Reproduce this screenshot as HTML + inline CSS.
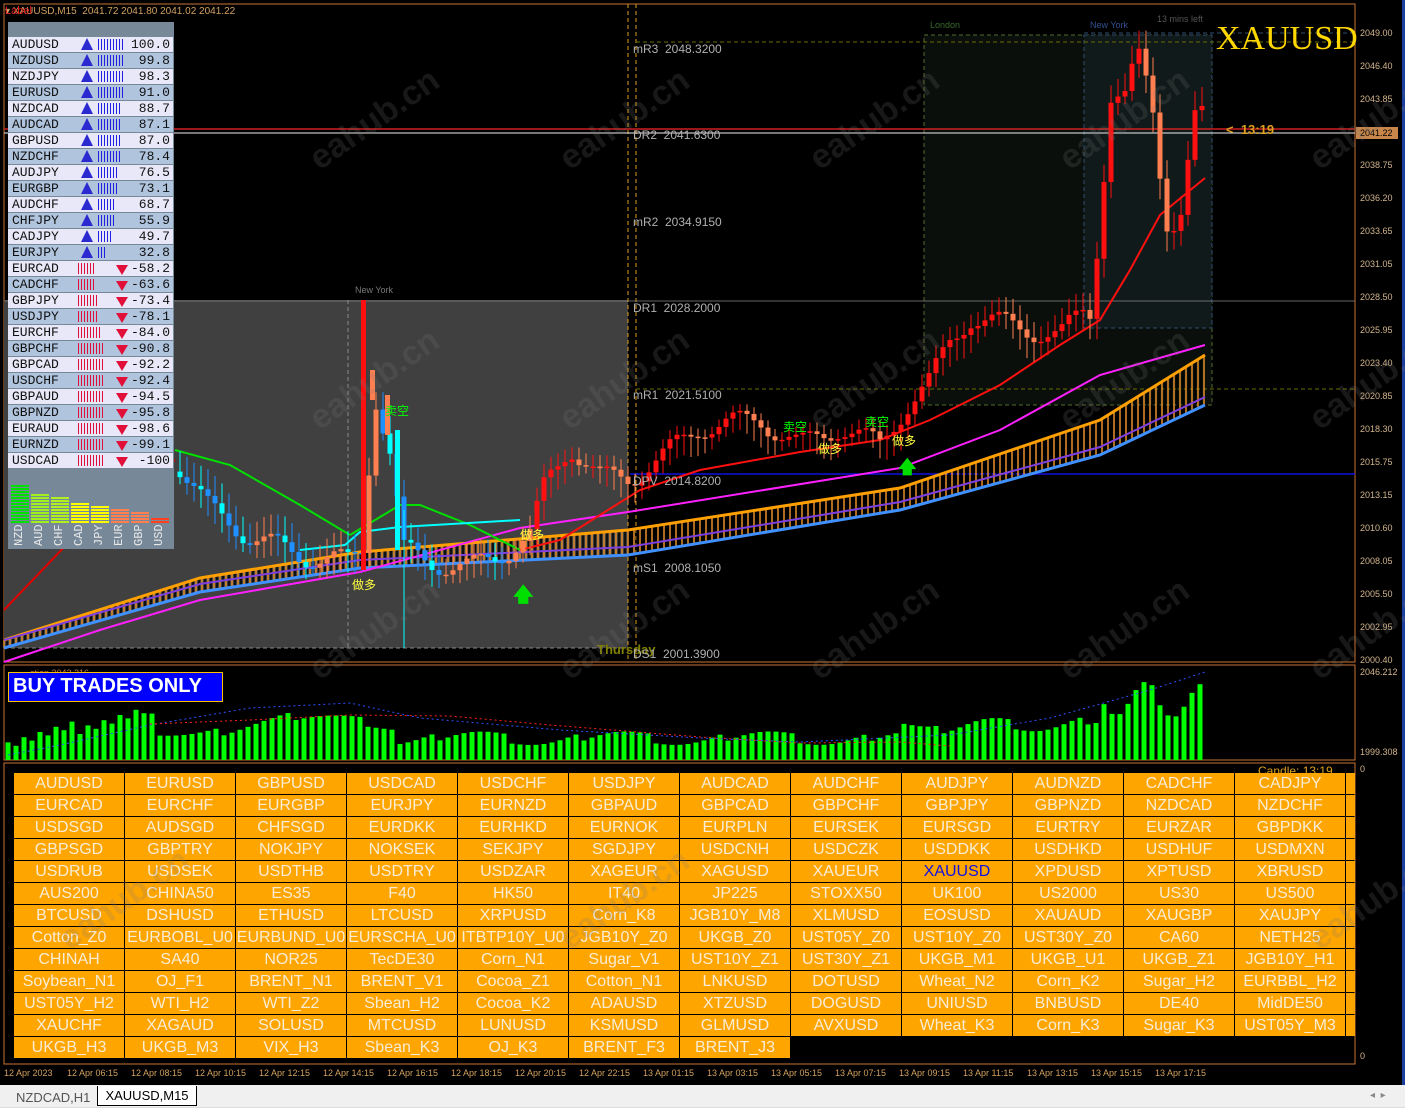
<!DOCTYPE html>
<html><head><meta charset="utf-8">
<style>
*{margin:0;padding:0;box-sizing:border-box}
body{width:1405px;height:1117px;background:#000;position:relative;overflow:hidden;font-family:"Liberation Sans","Noto Sans CJK SC",sans-serif}
.abs{position:absolute}
#tbl{left:8px;top:22px;width:166px;height:527px;background:#778899}
.row{position:absolute;left:0;width:165px;height:15px;font-family:"Liberation Mono",monospace;font-size:13px;line-height:15px;color:#111}
.row .n{position:absolute;left:4px}
.row .v{position:absolute;right:3px}
.row .bars{position:absolute;left:90px;top:2px;height:11px;background:repeating-linear-gradient(90deg,#2020e0 0 1px,transparent 1px 3px)}
.row.dn .bars{left:70px;background:repeating-linear-gradient(90deg,#e0103a 0 1px,transparent 1px 3px)}
.row .ar{position:absolute;left:73px;top:1px;width:0;height:0;border-left:6px solid transparent;border-right:6px solid transparent;border-bottom:12px solid #2a2ad0}
.row.dn .ar{left:108px;top:4px;border-bottom:none;border-top:10px solid #e0103a}
#grid{left:14px;top:773px}
.b{position:absolute;width:110px;height:21px;background:#ffa500;color:#f8ecd4;font-size:16px;line-height:21px;text-align:center;white-space:nowrap;overflow:hidden}
.pl{position:absolute;left:1360px;font-size:9px;color:#d2b48c;font-family:"Liberation Sans",sans-serif}
.tl{position:absolute;top:1068px;font-size:9px;color:#d2a060}
.piv{position:absolute;left:633px;font-size:12px;color:#b0b0b0}
.wm{position:absolute;font-size:34px;color:rgba(120,120,120,0.2);transform:rotate(-35deg);font-weight:bold;white-space:nowrap}
</style></head><body>

<svg class="abs" style="left:0;top:0" width="1405" height="1117" id="sv">
<rect x="0" y="0" width="1405" height="1085" fill="#000"/>
<rect x="4" y="4" width="1351" height="658" fill="none" stroke="#c87533" stroke-width="1"/>
<rect x="4" y="665" width="1351" height="95" fill="none" stroke="#c87533"/>
<rect x="4" y="763" width="1351" height="301" fill="none" stroke="#c87533"/>
<line x1="4" y1="1064" x2="1355" y2="1064" stroke="#c87533"/>
<rect x="4" y="300" width="624" height="348" fill="#404040"/>
<rect x="924" y="35" width="288" height="370" fill="#0b0f0b" stroke="#556b2f" stroke-dasharray="4,3"/>
<rect x="1084" y="35" width="128" height="293" fill="#111a1a" stroke="#2f4f6f" stroke-dasharray="4,3"/>
<line x1="348" y1="300" x2="348" y2="648" stroke="#888" stroke-dasharray="4,3"/>
<line x1="628" y1="4" x2="628" y2="662" stroke="#e0a020" stroke-dasharray="4,3"/>
<line x1="636" y1="4" x2="636" y2="662" stroke="#e0a020" stroke-dasharray="4,3"/>
<line x1="4" y1="648" x2="628" y2="648" stroke="#888" stroke-dasharray="4,3"/>
<line x1="636" y1="42" x2="1355" y2="42" stroke="#6b6b00" stroke-dasharray="4,3"/>
<line x1="1084" y1="33" x2="1355" y2="33" stroke="#2f4f6f" stroke-dasharray="4,3"/>
<line x1="636" y1="389" x2="1355" y2="389" stroke="#6b6b00" stroke-dasharray="4,3"/>
<line x1="4" y1="301" x2="1355" y2="301" stroke="#888" stroke-width="0.8"/>
<line x1="630" y1="474" x2="1355" y2="474" stroke="#1010e0" stroke-width="1.5"/>
<line x1="4" y1="129" x2="1355" y2="129" stroke="#d02020" stroke-width="1.5"/>
<line x1="4" y1="133" x2="1355" y2="133" stroke="#eee" stroke-width="1"/>
<g id="g"></g>
</svg>

<div class="abs" style="left:5px;top:6px;font-size:10px;color:#d2a060">▾ XAUUSD,M15&nbsp; 2041.72 2041.80 2041.02 2041.22</div>
<div class="abs" style="left:5px;top:5px;font-size:11px;color:#e02020">Label</div>
<div class="abs" style="left:1216px;top:20px;font-family:'Liberation Serif',serif;font-size:34px;color:#ffd700">XAUUSD</div>
<div class="abs" style="left:1157px;top:14px;font-size:9px;color:#555">13 mins left</div>
<div class="abs" style="left:1090px;top:20px;font-size:9px;color:#2f4f8f">New York</div>
<div class="abs" style="left:930px;top:20px;font-size:9px;color:#3a6b2a">London</div>
<div class="abs" style="left:355px;top:285px;font-size:9px;color:#777">New York</div>
<div class="abs" style="left:1226px;top:122px;font-size:13px;color:#e0a020;font-weight:bold">&lt;&nbsp; 13:19</div>
<div class="abs" style="left:597px;top:642px;font-size:13px;color:#808000;font-weight:bold">Thursday</div>
<div class="piv" style="top:42px">mR3&nbsp; 2048.3200</div>
<div class="piv" style="top:128px">DR2&nbsp; 2041.6300</div>
<div class="piv" style="top:215px">mR2&nbsp; 2034.9150</div>
<div class="piv" style="top:301px">DR1&nbsp; 2028.2000</div>
<div class="piv" style="top:388px">mR1&nbsp; 2021.5100</div>
<div class="piv" style="top:474px">DPV&nbsp; 2014.8200</div>
<div class="piv" style="top:561px">mS1&nbsp; 2008.1050</div>
<div class="piv" style="top:647px">DS1&nbsp; 2001.3900</div>
<div class="abs" style="left:783px;top:418px;font-size:12px;color:#00ff00">卖空</div>
<div class="abs" style="left:865px;top:413px;font-size:12px;color:#00ff00">卖空</div>
<div class="abs" style="left:385px;top:402px;font-size:12px;color:#00ff00">卖空</div>
<div class="abs" style="left:352px;top:576px;font-size:12px;color:#ffff40">做多</div>
<div class="abs" style="left:520px;top:526px;font-size:12px;color:#ffff40">做多</div>
<div class="abs" style="left:818px;top:440px;font-size:12px;color:#ffff40">做多</div>
<div class="abs" style="left:892px;top:432px;font-size:12px;color:#ffff40">做多</div>
<div class="abs" style="left:513px;top:580px;font-size:20px;color:#00e000;font-weight:bold">🡅</div>
<div class="abs" style="left:898px;top:455px;font-size:18px;color:#00e000;font-weight:bold">🡅</div>

<div class="pl" style="top:28px">2049.00</div><div class="pl" style="top:61px">2046.40</div><div class="pl" style="top:94px">2043.85</div>
<div class="abs" style="left:1356px;top:127px;width:42px;height:12px;background:#c8864a;color:#000;font-size:9px;line-height:12px;padding-left:4px">2041.22</div>
<div class="pl" style="top:160px">2038.75</div><div class="pl" style="top:193px">2036.20</div><div class="pl" style="top:226px">2033.65</div><div class="pl" style="top:259px">2031.05</div><div class="pl" style="top:292px">2028.50</div><div class="pl" style="top:325px">2025.95</div><div class="pl" style="top:358px">2023.40</div><div class="pl" style="top:391px">2020.85</div><div class="pl" style="top:424px">2018.30</div><div class="pl" style="top:457px">2015.75</div><div class="pl" style="top:490px">2013.15</div><div class="pl" style="top:523px">2010.60</div><div class="pl" style="top:556px">2008.05</div><div class="pl" style="top:589px">2005.50</div><div class="pl" style="top:622px">2002.95</div><div class="pl" style="top:655px">2000.40</div>
<div class="pl" style="top:667px">2046.212</div><div class="pl" style="top:747px">1999.308</div><div class="pl" style="top:764px">0</div><div class="pl" style="top:1051px">0</div>
<div class="abs" style="left:1402px;top:0;width:3px;height:1085px;background:#1c3f9f"></div>

<div class="abs" style="left:30px;top:668px;font-size:9px;color:#c87533">ction 2043.216</div>
<div class="abs" style="left:8px;top:672px;width:215px;height:30px;background:#0000ff;border:1px solid #ffc000;color:#fff;font-weight:bold;font-size:20px;line-height:26px;padding-left:4px">BUY TRADES ONLY</div>
<div class="abs" style="left:1258px;top:764px;font-size:12px;color:#e0a020">Candle: 13:19</div>

<div class="tl" style="left:4px">12 Apr 2023</div><div class="tl" style="left:67px">12 Apr 06:15</div><div class="tl" style="left:131px">12 Apr 08:15</div><div class="tl" style="left:195px">12 Apr 10:15</div><div class="tl" style="left:259px">12 Apr 12:15</div><div class="tl" style="left:323px">12 Apr 14:15</div><div class="tl" style="left:387px">12 Apr 16:15</div><div class="tl" style="left:451px">12 Apr 18:15</div><div class="tl" style="left:515px">12 Apr 20:15</div><div class="tl" style="left:579px">12 Apr 22:15</div><div class="tl" style="left:643px">13 Apr 01:15</div><div class="tl" style="left:707px">13 Apr 03:15</div><div class="tl" style="left:771px">13 Apr 05:15</div><div class="tl" style="left:835px">13 Apr 07:15</div><div class="tl" style="left:899px">13 Apr 09:15</div><div class="tl" style="left:963px">13 Apr 11:15</div><div class="tl" style="left:1027px">13 Apr 13:15</div><div class="tl" style="left:1091px">13 Apr 15:15</div><div class="tl" style="left:1155px">13 Apr 17:15</div>

<div class="abs" style="left:0;top:1085px;width:1405px;height:22px;background:#f0f0f0"></div>
<div class="abs" style="left:0;top:1107px;width:1405px;height:10px;background:#fff;border-top:1px solid #ddd"></div>
<div class="abs" style="left:16px;top:1090px;font-size:13px;color:#555">NZDCAD,H1</div>
<div class="abs" style="left:97px;top:1086px;width:100px;height:20px;background:#fff;border:1px solid #000;border-top:none;font-size:13px;line-height:20px;text-align:center;color:#000">XAUUSD,M15</div>
<div class="abs" style="left:1370px;top:1090px;font-size:10px;color:#888">◂ &nbsp;▸</div>

<div class="abs" id="tbl">
<div class="row" style="top:15px;background:#e8e8f8"><span class="n">AUDUSD</span><span class="ar"></span><span class="bars" style="width:27px"></span><span class="v">100.0</span></div>
<div class="row" style="top:31px;background:#b0c4de"><span class="n">NZDUSD</span><span class="ar"></span><span class="bars" style="width:27px"></span><span class="v">99.8</span></div>
<div class="row" style="top:47px;background:#e8e8f8"><span class="n">NZDJPY</span><span class="ar"></span><span class="bars" style="width:27px"></span><span class="v">98.3</span></div>
<div class="row" style="top:63px;background:#b0c4de"><span class="n">EURUSD</span><span class="ar"></span><span class="bars" style="width:27px"></span><span class="v">91.0</span></div>
<div class="row" style="top:79px;background:#e8e8f8"><span class="n">NZDCAD</span><span class="ar"></span><span class="bars" style="width:24px"></span><span class="v">88.7</span></div>
<div class="row" style="top:95px;background:#b0c4de"><span class="n">AUDCAD</span><span class="ar"></span><span class="bars" style="width:24px"></span><span class="v">87.1</span></div>
<div class="row" style="top:111px;background:#e8e8f8"><span class="n">GBPUSD</span><span class="ar"></span><span class="bars" style="width:24px"></span><span class="v">87.0</span></div>
<div class="row" style="top:127px;background:#b0c4de"><span class="n">NZDCHF</span><span class="ar"></span><span class="bars" style="width:24px"></span><span class="v">78.4</span></div>
<div class="row" style="top:143px;background:#e8e8f8"><span class="n">AUDJPY</span><span class="ar"></span><span class="bars" style="width:21px"></span><span class="v">76.5</span></div>
<div class="row" style="top:159px;background:#b0c4de"><span class="n">EURGBP</span><span class="ar"></span><span class="bars" style="width:21px"></span><span class="v">73.1</span></div>
<div class="row" style="top:175px;background:#e8e8f8"><span class="n">AUDCHF</span><span class="ar"></span><span class="bars" style="width:18px"></span><span class="v">68.7</span></div>
<div class="row" style="top:191px;background:#b0c4de"><span class="n">CHFJPY</span><span class="ar"></span><span class="bars" style="width:18px"></span><span class="v">55.9</span></div>
<div class="row" style="top:207px;background:#e8e8f8"><span class="n">CADJPY</span><span class="ar"></span><span class="bars" style="width:15px"></span><span class="v">49.7</span></div>
<div class="row" style="top:223px;background:#b0c4de"><span class="n">EURJPY</span><span class="ar"></span><span class="bars" style="width:9px"></span><span class="v">32.8</span></div>
<div class="row dn" style="top:239px;background:#e8e8f8"><span class="n">EURCAD</span><span class="bars" style="width:18px"></span><span class="ar"></span><span class="v">-58.2</span></div>
<div class="row dn" style="top:255px;background:#b0c4de"><span class="n">CADCHF</span><span class="bars" style="width:18px"></span><span class="ar"></span><span class="v">-63.6</span></div>
<div class="row dn" style="top:271px;background:#e8e8f8"><span class="n">GBPJPY</span><span class="bars" style="width:21px"></span><span class="ar"></span><span class="v">-73.4</span></div>
<div class="row dn" style="top:287px;background:#b0c4de"><span class="n">USDJPY</span><span class="bars" style="width:21px"></span><span class="ar"></span><span class="v">-78.1</span></div>
<div class="row dn" style="top:303px;background:#e8e8f8"><span class="n">EURCHF</span><span class="bars" style="width:24px"></span><span class="ar"></span><span class="v">-84.0</span></div>
<div class="row dn" style="top:319px;background:#b0c4de"><span class="n">GBPCHF</span><span class="bars" style="width:27px"></span><span class="ar"></span><span class="v">-90.8</span></div>
<div class="row dn" style="top:335px;background:#e8e8f8"><span class="n">GBPCAD</span><span class="bars" style="width:27px"></span><span class="ar"></span><span class="v">-92.2</span></div>
<div class="row dn" style="top:351px;background:#b0c4de"><span class="n">USDCHF</span><span class="bars" style="width:27px"></span><span class="ar"></span><span class="v">-92.4</span></div>
<div class="row dn" style="top:367px;background:#e8e8f8"><span class="n">GBPAUD</span><span class="bars" style="width:27px"></span><span class="ar"></span><span class="v">-94.5</span></div>
<div class="row dn" style="top:383px;background:#b0c4de"><span class="n">GBPNZD</span><span class="bars" style="width:27px"></span><span class="ar"></span><span class="v">-95.8</span></div>
<div class="row dn" style="top:399px;background:#e8e8f8"><span class="n">EURAUD</span><span class="bars" style="width:27px"></span><span class="ar"></span><span class="v">-98.6</span></div>
<div class="row dn" style="top:415px;background:#b0c4de"><span class="n">EURNZD</span><span class="bars" style="width:27px"></span><span class="ar"></span><span class="v">-99.1</span></div>
<div class="row dn" style="top:431px;background:#e8e8f8"><span class="n">USDCAD</span><span class="bars" style="width:27px"></span><span class="ar"></span><span class="v">-100</span></div>
<svg class="abs" style="left:0;top:448px" width="166" height="79">
<g id="cs"></g>
<g font-family="Liberation Mono,monospace" font-size="12" fill="#e8e8e8">
<text transform="translate(14,76) rotate(-90)">NZD</text><text transform="translate(34,76) rotate(-90)">AUD</text><text transform="translate(54,76) rotate(-90)">CHF</text><text transform="translate(74,76) rotate(-90)">CAD</text><text transform="translate(94,76) rotate(-90)">JPY</text><text transform="translate(114,76) rotate(-90)">EUR</text><text transform="translate(134,76) rotate(-90)">GBP</text><text transform="translate(154,76) rotate(-90)">USD</text>
</g></svg>
</div>

<div class="abs" id="grid">
<div class="b" style="left:0;top:0">AUDUSD</div><div class="b" style="left:111px;top:0">EURUSD</div><div class="b" style="left:222px;top:0">GBPUSD</div><div class="b" style="left:333px;top:0">USDCAD</div><div class="b" style="left:444px;top:0">USDCHF</div><div class="b" style="left:555px;top:0">USDJPY</div><div class="b" style="left:666px;top:0">AUDCAD</div><div class="b" style="left:777px;top:0">AUDCHF</div><div class="b" style="left:888px;top:0">AUDJPY</div><div class="b" style="left:999px;top:0">AUDNZD</div><div class="b" style="left:1110px;top:0">CADCHF</div><div class="b" style="left:1221px;top:0">CADJPY</div>
<div class="b" style="left:0;top:22px">EURCAD</div><div class="b" style="left:111px;top:22px">EURCHF</div><div class="b" style="left:222px;top:22px">EURGBP</div><div class="b" style="left:333px;top:22px">EURJPY</div><div class="b" style="left:444px;top:22px">EURNZD</div><div class="b" style="left:555px;top:22px">GBPAUD</div><div class="b" style="left:666px;top:22px">GBPCAD</div><div class="b" style="left:777px;top:22px">GBPCHF</div><div class="b" style="left:888px;top:22px">GBPJPY</div><div class="b" style="left:999px;top:22px">GBPNZD</div><div class="b" style="left:1110px;top:22px">NZDCAD</div><div class="b" style="left:1221px;top:22px">NZDCHF</div>
<div class="b" style="left:0;top:44px">USDSGD</div><div class="b" style="left:111px;top:44px">AUDSGD</div><div class="b" style="left:222px;top:44px">CHFSGD</div><div class="b" style="left:333px;top:44px">EURDKK</div><div class="b" style="left:444px;top:44px">EURHKD</div><div class="b" style="left:555px;top:44px">EURNOK</div><div class="b" style="left:666px;top:44px">EURPLN</div><div class="b" style="left:777px;top:44px">EURSEK</div><div class="b" style="left:888px;top:44px">EURSGD</div><div class="b" style="left:999px;top:44px">EURTRY</div><div class="b" style="left:1110px;top:44px">EURZAR</div><div class="b" style="left:1221px;top:44px">GBPDKK</div>
<div class="b" style="left:0;top:66px">GBPSGD</div><div class="b" style="left:111px;top:66px">GBPTRY</div><div class="b" style="left:222px;top:66px">NOKJPY</div><div class="b" style="left:333px;top:66px">NOKSEK</div><div class="b" style="left:444px;top:66px">SEKJPY</div><div class="b" style="left:555px;top:66px">SGDJPY</div><div class="b" style="left:666px;top:66px">USDCNH</div><div class="b" style="left:777px;top:66px">USDCZK</div><div class="b" style="left:888px;top:66px">USDDKK</div><div class="b" style="left:999px;top:66px">USDHKD</div><div class="b" style="left:1110px;top:66px">USDHUF</div><div class="b" style="left:1221px;top:66px">USDMXN</div>
<div class="b" style="left:0;top:88px">USDRUB</div><div class="b" style="left:111px;top:88px">USDSEK</div><div class="b" style="left:222px;top:88px">USDTHB</div><div class="b" style="left:333px;top:88px">USDTRY</div><div class="b" style="left:444px;top:88px">USDZAR</div><div class="b" style="left:555px;top:88px">XAGEUR</div><div class="b" style="left:666px;top:88px">XAGUSD</div><div class="b" style="left:777px;top:88px">XAUEUR</div><div class="b" style="left:888px;top:88px;color:#1010e0">XAUUSD</div><div class="b" style="left:999px;top:88px">XPDUSD</div><div class="b" style="left:1110px;top:88px">XPTUSD</div><div class="b" style="left:1221px;top:88px">XBRUSD</div>
<div class="b" style="left:0;top:110px">AUS200</div><div class="b" style="left:111px;top:110px">CHINA50</div><div class="b" style="left:222px;top:110px">ES35</div><div class="b" style="left:333px;top:110px">F40</div><div class="b" style="left:444px;top:110px">HK50</div><div class="b" style="left:555px;top:110px">IT40</div><div class="b" style="left:666px;top:110px">JP225</div><div class="b" style="left:777px;top:110px">STOXX50</div><div class="b" style="left:888px;top:110px">UK100</div><div class="b" style="left:999px;top:110px">US2000</div><div class="b" style="left:1110px;top:110px">US30</div><div class="b" style="left:1221px;top:110px">US500</div>
<div class="b" style="left:0;top:132px">BTCUSD</div><div class="b" style="left:111px;top:132px">DSHUSD</div><div class="b" style="left:222px;top:132px">ETHUSD</div><div class="b" style="left:333px;top:132px">LTCUSD</div><div class="b" style="left:444px;top:132px">XRPUSD</div><div class="b" style="left:555px;top:132px">Corn_K8</div><div class="b" style="left:666px;top:132px">JGB10Y_M8</div><div class="b" style="left:777px;top:132px">XLMUSD</div><div class="b" style="left:888px;top:132px">EOSUSD</div><div class="b" style="left:999px;top:132px">XAUAUD</div><div class="b" style="left:1110px;top:132px">XAUGBP</div><div class="b" style="left:1221px;top:132px">XAUJPY</div>
<div class="b" style="left:0;top:154px">Cotton_Z0</div><div class="b" style="left:111px;top:154px">EURBOBL_U0</div><div class="b" style="left:222px;top:154px">EURBUND_U0</div><div class="b" style="left:333px;top:154px">EURSCHA_U0</div><div class="b" style="left:444px;top:154px">ITBTP10Y_U0</div><div class="b" style="left:555px;top:154px">JGB10Y_Z0</div><div class="b" style="left:666px;top:154px">UKGB_Z0</div><div class="b" style="left:777px;top:154px">UST05Y_Z0</div><div class="b" style="left:888px;top:154px">UST10Y_Z0</div><div class="b" style="left:999px;top:154px">UST30Y_Z0</div><div class="b" style="left:1110px;top:154px">CA60</div><div class="b" style="left:1221px;top:154px">NETH25</div>
<div class="b" style="left:0;top:176px">CHINAH</div><div class="b" style="left:111px;top:176px">SA40</div><div class="b" style="left:222px;top:176px">NOR25</div><div class="b" style="left:333px;top:176px">TecDE30</div><div class="b" style="left:444px;top:176px">Corn_N1</div><div class="b" style="left:555px;top:176px">Sugar_V1</div><div class="b" style="left:666px;top:176px">UST10Y_Z1</div><div class="b" style="left:777px;top:176px">UST30Y_Z1</div><div class="b" style="left:888px;top:176px">UKGB_M1</div><div class="b" style="left:999px;top:176px">UKGB_U1</div><div class="b" style="left:1110px;top:176px">UKGB_Z1</div><div class="b" style="left:1221px;top:176px">JGB10Y_H1</div>
<div class="b" style="left:0;top:198px">Soybean_N1</div><div class="b" style="left:111px;top:198px">OJ_F1</div><div class="b" style="left:222px;top:198px">BRENT_N1</div><div class="b" style="left:333px;top:198px">BRENT_V1</div><div class="b" style="left:444px;top:198px">Cocoa_Z1</div><div class="b" style="left:555px;top:198px">Cotton_N1</div><div class="b" style="left:666px;top:198px">LNKUSD</div><div class="b" style="left:777px;top:198px">DOTUSD</div><div class="b" style="left:888px;top:198px">Wheat_N2</div><div class="b" style="left:999px;top:198px">Corn_K2</div><div class="b" style="left:1110px;top:198px">Sugar_H2</div><div class="b" style="left:1221px;top:198px">EURBBL_H2</div>
<div class="b" style="left:0;top:220px">UST05Y_H2</div><div class="b" style="left:111px;top:220px">WTI_H2</div><div class="b" style="left:222px;top:220px">WTI_Z2</div><div class="b" style="left:333px;top:220px">Sbean_H2</div><div class="b" style="left:444px;top:220px">Cocoa_K2</div><div class="b" style="left:555px;top:220px">ADAUSD</div><div class="b" style="left:666px;top:220px">XTZUSD</div><div class="b" style="left:777px;top:220px">DOGUSD</div><div class="b" style="left:888px;top:220px">UNIUSD</div><div class="b" style="left:999px;top:220px">BNBUSD</div><div class="b" style="left:1110px;top:220px">DE40</div><div class="b" style="left:1221px;top:220px">MidDE50</div>
<div class="b" style="left:0;top:242px">XAUCHF</div><div class="b" style="left:111px;top:242px">XAGAUD</div><div class="b" style="left:222px;top:242px">SOLUSD</div><div class="b" style="left:333px;top:242px">MTCUSD</div><div class="b" style="left:444px;top:242px">LUNUSD</div><div class="b" style="left:555px;top:242px">KSMUSD</div><div class="b" style="left:666px;top:242px">GLMUSD</div><div class="b" style="left:777px;top:242px">AVXUSD</div><div class="b" style="left:888px;top:242px">Wheat_K3</div><div class="b" style="left:999px;top:242px">Corn_K3</div><div class="b" style="left:1110px;top:242px">Sugar_K3</div><div class="b" style="left:1221px;top:242px">UST05Y_M3</div>
<div class="b" style="left:0;top:264px">UKGB_H3</div><div class="b" style="left:111px;top:264px">UKGB_M3</div><div class="b" style="left:222px;top:264px">VIX_H3</div><div class="b" style="left:333px;top:264px">Sbean_K3</div><div class="b" style="left:444px;top:264px">OJ_K3</div><div class="b" style="left:555px;top:264px">BRENT_F3</div><div class="b" style="left:666px;top:264px">BRENT_J3</div>
<div class="b" style="left:1332px;top:0;width:9px"></div><div class="b" style="left:1332px;top:22px;width:9px"></div><div class="b" style="left:1332px;top:44px;width:9px"></div><div class="b" style="left:1332px;top:66px;width:9px"></div><div class="b" style="left:1332px;top:88px;width:9px"></div><div class="b" style="left:1332px;top:110px;width:9px"></div><div class="b" style="left:1332px;top:132px;width:9px"></div><div class="b" style="left:1332px;top:154px;width:9px"></div><div class="b" style="left:1332px;top:176px;width:9px"></div><div class="b" style="left:1332px;top:198px;width:9px"></div><div class="b" style="left:1332px;top:220px;width:9px"></div><div class="b" style="left:1332px;top:242px;width:9px"></div>
</div>

<div class="wm" style="left:300px;top:100px">eahub.cn</div><div class="wm" style="left:550px;top:100px">eahub.cn</div><div class="wm" style="left:800px;top:100px">eahub.cn</div><div class="wm" style="left:1050px;top:100px">eahub.cn</div><div class="wm" style="left:1300px;top:100px">eahub.cn</div>
<div class="wm" style="left:300px;top:360px">eahub.cn</div><div class="wm" style="left:550px;top:360px">eahub.cn</div><div class="wm" style="left:800px;top:360px">eahub.cn</div><div class="wm" style="left:1050px;top:360px">eahub.cn</div><div class="wm" style="left:1300px;top:360px">eahub.cn</div>
<div class="wm" style="left:300px;top:610px">eahub.cn</div><div class="wm" style="left:550px;top:610px">eahub.cn</div><div class="wm" style="left:800px;top:610px">eahub.cn</div><div class="wm" style="left:1050px;top:610px">eahub.cn</div><div class="wm" style="left:1300px;top:610px">eahub.cn</div>
<div class="wm" style="left:50px;top:880px">eahub.cn</div><div class="wm" style="left:550px;top:880px">eahub.cn</div><div class="wm" style="left:1300px;top:880px">eahub.cn</div>

<script>
(function(){
var NS="http://www.w3.org/2000/svg",g=document.getElementById('g');
function el(t,a){var e=document.createElementNS(NS,t);for(var k in a)e.setAttribute(k,a[k]);g.appendChild(e);return e;}
function Y(p){return 33+(2049-p)*12.9;}
function interp(pts,x){for(var i=0;i<pts.length-1;i++){if(x>=pts[i][0]&&x<=pts[i+1][0]){var t=(x-pts[i][0])/(pts[i+1][0]-pts[i][0]);return pts[i][1]+t*(pts[i+1][1]-pts[i][1]);}}return pts[pts.length-1][1];}
function line(pts,c,w,d){var s="M"+pts.map(function(p){return p[0]+","+p[1]}).join(" L");var a={d:s,stroke:c,"stroke-width":w,fill:"none"};if(d)a["stroke-dasharray"]=d;el('path',a);}
var ob=[[4,640],[200,578],[360,552],[628,530],[900,488],[1100,420],[1205,355]];
var bb=[[4,648],[200,592],[360,568],[628,555],[900,510],[1100,455],[1205,405]];
for(var x=4;x<=1205;x+=3){var a=interp(ob,x),b=interp(bb,x);el('line',{x1:x,y1:a,x2:x,y2:b,stroke:(x%2?"#000":"#e8902a"),"stroke-width":1.5});}
line(ob,"#ffa000",3);line(bb,"#4090ff",3);
line(bb.map(function(p){return [p[0],p[1]-8]}),"#8040e0",2);
line([[4,662],[100,630],[200,600],[360,572],[520,528],[628,512],[900,468],[1000,430],[1100,375],[1205,345]],"#ff20ff",2);
line([[4,610],[90,520],[175,460]],"#e00000",2);
line([[175,450],[230,465],[300,505],[350,535]],"#00e000",2);
line([[350,535],[400,505],[420,505],[470,525],[520,550]],"#00e000",2);
line([[300,550],[345,545],[360,532],[400,527],[520,520]],"#00ffff",2);
line([[520,550],[560,540],[600,515],[640,490],[700,470],[800,452],[880,440],[930,420],[1000,385],[1060,345],[1100,320],[1130,270],[1160,215],[1205,178]],"#ff1010",2);
var path=[[175,2016],[210,2012],[250,2010],[300,2008.5],[350,2008],[362,2009],[375,2021],[395,2015],[400,2009],[430,2008],[470,2007.5],[510,2009],[530,2010],[545,2014],[570,2017],[600,2014.5],[630,2014.5],[660,2016],[700,2018.5],[760,2019],[800,2017],[840,2018.5],[880,2017],[905,2020],[930,2022],[950,2025],[970,2027],[1000,2026.5],[1030,2026],[1060,2025.5],[1090,2028],[1100,2036],[1110,2045],[1125,2043],[1140,2046],[1155,2043],[1165,2036],[1180,2035],[1195,2041],[1205,2041.2]];
var prev=2015;
for(var x=180;x<=1205;x+=7){var c=interp(path,x)+Math.sin(x*1.7)*0.9*(x<1090?1:2.5);var o=prev;prev=c;
var hi=Math.max(o,c)+0.5+Math.abs(Math.sin(x*0.9))*1.1,lo=Math.min(o,c)-0.5-Math.abs(Math.cos(x*1.3))*1.1;
var up=c>o,col;
if(x<628){col=up?(x>530?"#ff1010":"#ff7f50"):(x%3?"#1e90ff":"#00ffff");if(x>530&&!up)col="#ff7f50";}else col=up?"#ff1010":"#ff7f50";
el('line',{x1:x,y1:Y(hi),x2:x,y2:Y(lo),stroke:col,"stroke-width":1});
var t=Y(Math.max(o,c)),bt=Y(Math.min(o,c));el('rect',{x:x-2.5,y:t,width:5,height:Math.max(1.5,bt-t),fill:col});}
el('rect',{x:361,y:300,width:5,height:270,fill:"#ff1010"});
el('rect',{x:395,y:430,width:5,height:120,fill:"#00ffff"});el('line',{x1:404,y1:510,x2:404,y2:648,stroke:"#00ffff"});
el('rect',{x:370,y:370,width:5,height:30,fill:"#ff7f50"});el('rect',{x:385,y:395,width:5,height:40,fill:"#ff7f50"});
for(var i=0,x=8;x<=1205;x+=8,i++){var h;
if(x<160)h=14+x*0.2+(x%16?6:0);else if(x<400)h=35+10*Math.sin(x/40);else if(x<900)h=22+6*Math.sin(x/23);else if(x<1100)h=35+5*Math.sin(x/17);else h=60+15*Math.sin(x/9);
h=Math.max(10,h+((i*37)%9)-4);
el('rect',{x:x-2.5,y:760-h,width:5,height:h,fill:"#00ff00"});}
line([[8,755],[60,745],[150,725],[250,708],[350,703],[420,718],[560,730],[700,738],[800,742],[950,735],[1050,718],[1150,690],[1205,672]],"#3050ff",1,"2,3");
line([[150,724],[250,720],[350,715],[450,716],[550,725],[700,737],[800,743],[900,742],[950,746]],"#ff2020",1,"2,3");
var cs=document.getElementById('cs');var hts=[13,10,9,7,6,5,4,2],cols=["#00e000","#a0f020","#b0f020","#ffff00","#ffff00","#ff7f50","#ff7f50","#ff4020"];
for(var j=0;j<8;j++){for(var k=0;k<hts[j];k++){var r=document.createElementNS(NS,'rect');r.setAttribute('x',3+j*20);r.setAttribute('y',53-k*3-2);r.setAttribute('width',18);r.setAttribute('height',2);r.setAttribute('fill',cols[j]);cs.appendChild(r);}}
})();
</script>
</body></html>
